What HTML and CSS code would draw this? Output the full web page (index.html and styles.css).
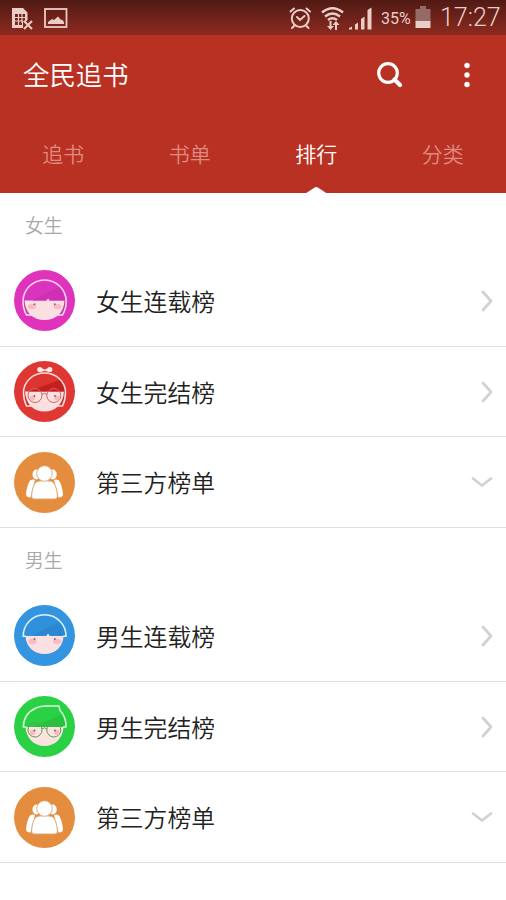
FILE: index.html
```html
<!DOCTYPE html>
<html lang="zh-CN">
<head>
<meta charset="utf-8">
<title>全民追书</title>
<link rel="stylesheet" href="styles.css">
</head>
<body>
<div class="status">
  <svg class="status-left" width="60" height="24" viewBox="10 5 60 24">
    <path fill="#e9cdc6" fill-rule="evenodd" d="M12 7H23L27.500 11.500V19L25 21.500 23 20V27H12ZM15 13V24H22V20H25V13Z"/>
    <path d="M15 16.500H25M15 20H23M18.500 13V24M22 13V22" stroke="#e9cdc6" stroke-width="1.200"/>
    <path d="M24 20L32 28M32 20L24 28" stroke="#e9cdc6" stroke-width="2"/>
    <rect x="45" y="8" width="21.500" height="18" fill="none" stroke="#e9cdc6" stroke-width="1.800"/>
    <path d="M48 23V21L52 18 54 19 58 15.500 61 19 62 18.500 64 21V23Z" fill="#e9cdc6"/>
  </svg>
  <svg class="status-signal" width="88" height="26" viewBox="288 4 88 26">
    <g fill="none" stroke="#e9cdc6" stroke-width="2" stroke-linecap="round">
      <circle cx="300.300" cy="17.500" r="8.500"/>
      <path d="M297 16L300 19 304.500 15M290.500 10.500L294 7.500M310 10.500L306.500 7.500M294 25L292 27M306.500 25L308.500 27"/>
      <path stroke-width="2.500" stroke-linecap="butt" d="M322 11.500Q332.500 3 343 11.500M325 15.500Q332.500 9.500 340 15.500M328 19Q332.500 15.500 337 19"/>
    </g>
    <path fill="#e9cdc6" d="M329.500 20H331.500V25H334L330.500 29 327 25H329.500ZM335 29V24H332.500L336 20 339.500 24H337V29ZM349 28.500V27L352 25.500V28.500ZM355 28.500V23.500L358 21.500V28.500ZM361 28.500V18L364.500 15.500V28.500ZM367.500 28.500V9L371.500 6.500V28.500Z"/>
  </svg>
  <span class="percent">35%</span>
  <svg class="battery" width="16" height="24" viewBox="0 0 16 24">
    <path d="M5 0H11V3H15.500V16H.5V3H5Z" fill="#956b67"/><path d="M.5 15H15.500V22H.5Z" fill="#e9cdc6"/>
  </svg>
  <span class="clock">17:27</span>
</div>
<header class="header">
  <div class="bar">
    <h1 class="title">全民追书</h1>
    <svg class="search" width="28" height="28" viewBox="0 0 28 28" fill="none" stroke="#fff"><circle cx="12" cy="12" r="9.300" stroke-width="3.200"/><path d="M18.500 18.500L24 24" stroke-width="4.200" stroke-linecap="round"/></svg>
    <svg class="more" width="6" height="26" viewBox="0 0 6 26" fill="#fff"><circle cx="3" cy="3.500" r="2.700"/><circle cx="3" cy="13" r="2.700"/><circle cx="3" cy="22.500" r="2.700"/></svg>
  </div>
  <nav class="tabs">
    <span class="tab">追书</span><span class="tab">书单</span><span class="tab active">排行</span><span class="tab">分类</span>
  </nav>
</header>
<main>
  <section>
    <h2 class="label">女生</h2>
    <div class="row">
      <svg class="avatar" viewBox="0 0 61 61">
        <circle cx="30.500" cy="30.500" r="30.500" fill="#e033bb"/>
        <path d="M9.500 30V36L12.500 45H17L12.500 30ZM51.500 30V36L48.500 45H44L48.500 30Z" fill="#b9479f"/>
        <path d="M10.500 30C11 43 19 50 30.500 50S50 43 50.500 30Z" fill="#fbe0e3"/>
        <path d="M9.500 30.500A21.500 20.500 0 0 1 52 30.500Z" fill="#d934bd"/><path d="M18 30.500L45 17Q51 22 51 30.500Z" fill="#cf2fb3"/>
        <path d="M18 45H12.500Q9 39 9 31.500A21.600 21.600 0 0 1 52.200 31.500Q52.200 39 48.500 45H43" fill="none" stroke="#ffd9f5" stroke-width="1.500"/>
        <path d="M32 30.800L34 28.500 36 30.800Z" fill="#fbe0e3"/>
        <g fill="#f7bcc3"><ellipse cx="18" cy="36.500" rx="4" ry="2.800"/><ellipse cx="43.500" cy="36.500" rx="4" ry="2.800"/></g>
        <circle cx="20.500" cy="34.300" r="1" fill="#94606a"/><circle cx="40.800" cy="34.300" r="1" fill="#94606a"/>
      </svg>
      <span class="name">女生连载榜</span>
      <svg class="arrow" width="14" height="24" viewBox="0 0 14 24"><path d="M3 3L11 12 3 21"/></svg>
    </div>
    <div class="row">
      <svg class="avatar" viewBox="0 0 61 61">
        <circle cx="30.500" cy="30.500" r="30.500" fill="#df3734"/>
        <path d="M10.500 30V37L12.500 45H17L13 30ZM50.500 30V37L48.500 45H44L48 30Z" fill="#bb3534"/>
        <path d="M11 30C11.500 43 19.500 50.500 30.500 50.500S49.500 43 50 30Z" fill="#fbe0df"/>
        <path d="M10 30.500A20.500 18 0 0 1 51 30.500Z" fill="#dc3431"/><path d="M14 30.500L46 19Q51 23 51 30.500Z" fill="#c3201f"/>
        <path d="M18 45H12.500Q9.500 39 9.500 31.500A21 19.500 0 0 1 51.500 31.500Q51.500 39 48.500 45H43" fill="none" stroke="#ffdfda" stroke-width="1.500"/>
        <g fill="#ffe5e1"><circle cx="25.800" cy="8.500" r="2.600"/><circle cx="35.800" cy="8.500" r="2.600"/><path d="M25 7H27L30.800 8.500 34.500 7H36.500V11H34.500L30.800 9.800 27 11H25Z"/></g>
        <g fill="none" stroke="#c66a68" stroke-width="1"><circle cx="21" cy="34.500" r="7"/><circle cx="39.800" cy="34.500" r="7"/><path d="M28 33.500Q30.400 31 32.800 33.500"/></g>
        <g fill="#f7bcbd"><circle cx="18.500" cy="37" r="2.700"/><circle cx="43" cy="37" r="2.700"/></g>
        <circle cx="20.500" cy="35" r=".9" fill="#94504f"/><circle cx="41" cy="35" r=".9" fill="#94504f"/>
      </svg>
      <span class="name">女生完结榜</span>
      <svg class="arrow" width="14" height="24" viewBox="0 0 14 24"><path d="M3 3L11 12 3 21"/></svg>
    </div>
    <div class="row">
      <svg class="avatar" viewBox="0 0 61 61"><use href="#group"/></svg>
      <span class="name">第三方榜单</span>
      <svg class="arrow" width="24" height="14" viewBox="0 0 24 14"><path d="M3 3.500L12 10.500 21 3.500"/></svg>
    </div>
  </section>
  <section>
    <h2 class="label">男生</h2>
    <div class="row">
      <svg class="avatar" viewBox="0 0 61 61">
        <circle cx="30.500" cy="30.500" r="30.500" fill="#3594df"/>
        <path d="M11.500 31C12 42 20 49 30.500 49S49 42 49.500 31Z" fill="#fbe0e3"/>
        <path d="M9.500 30.500A21 20.500 0 0 1 51.500 30.500Z" fill="#3190dc"/><path d="M18 30.500L45 17Q50 22 51 30.500Z" fill="#2b87d0"/>
        <path d="M12 31.200H9.200A21.400 21.400 0 0 1 52 31.200H49" fill="none" stroke="#dff3ff" stroke-width="1.500"/>
        <path d="M32 31.200L34 28.500 36 31.200Z" fill="#fbe0e3"/>
        <g fill="#f7bcc3"><ellipse cx="18.500" cy="36.500" rx="4" ry="2.800"/><ellipse cx="43" cy="36.500" rx="4" ry="2.800"/></g>
        <circle cx="20.500" cy="34" r="1" fill="#94606a"/><circle cx="40.800" cy="34" r="1" fill="#94606a"/>
      </svg>
      <span class="name">男生连载榜</span>
      <svg class="arrow" width="14" height="24" viewBox="0 0 14 24"><path d="M3 3L11 12 3 21"/></svg>
    </div>
    <div class="row">
      <svg class="avatar" viewBox="0 0 61 61">
        <circle cx="30.500" cy="30.500" r="30.500" fill="#2bd144"/>
        <path d="M11.500 31C12 42 20 50 30.500 50S49 42 49.500 31Z" fill="#fbe4df"/>
        <path d="M18 31L47 19Q51 23 51 31Z" fill="#25c43d"/>
        <path d="M12 31H9.200Q10 17 22 12 26 10 33 10H45L46 14.500Q52 20 52 31H49" fill="none" stroke="#d8ffdc" stroke-width="1.500" stroke-linejoin="round"/>
        <g fill="none" stroke="#619b62" stroke-width="1"><circle cx="21" cy="34" r="7"/><circle cx="39.800" cy="34" r="7"/><path d="M28 33Q30.400 30.500 32.800 33"/></g>
        <g fill="#f7bcbd"><circle cx="18.500" cy="36.500" r="2.700"/><circle cx="43" cy="36.500" r="2.700"/></g>
        <circle cx="20.500" cy="34.500" r=".9" fill="#75604f"/><circle cx="41" cy="34.500" r=".9" fill="#75604f"/>
      </svg>
      <span class="name">男生完结榜</span>
      <svg class="arrow" width="14" height="24" viewBox="0 0 14 24"><path d="M3 3L11 12 3 21"/></svg>
    </div>
    <div class="row">
      <svg class="avatar" viewBox="0 0 61 61">
        <g id="group">
          <circle cx="30.500" cy="30.500" r="30.500" fill="#e58d3e"/>
          <g fill="#fff"><ellipse cx="22.500" cy="22.500" rx="4" ry="5"/><ellipse cx="38.700" cy="22.500" rx="4" ry="5"/>
          <path d="M16 28.500Q19 27 21 28L16.500 45.500Q12 45.500 12 42 13 33 16 28.500ZM45 28.500Q42 27 40 28L44.500 45.500Q49 45.500 49 42 48 33 45 28.500Z"/></g>
          <path d="M23 29.500Q30.500 27 38 29.500 42.500 32 43.500 44 43.500 47 41 47H20Q17.500 47 17.500 44 18.500 32 23 29.500Z" fill="#fff" stroke="#d9a273" stroke-width=".9"/>
          <circle cx="30.500" cy="21.500" r="7.800" fill="#fff" stroke="#d9a273" stroke-width=".9"/>
        </g>
      </svg>
      <span class="name">第三方榜单</span>
      <svg class="arrow" width="24" height="14" viewBox="0 0 24 14"><path d="M3 3.500L12 10.500 21 3.500"/></svg>
    </div>
  </section>
</main>
</body>
</html>
```
FILE: styles.css
```css
* { box-sizing: border-box; }
body {
  margin: 0;
  height: 900px;
  overflow: hidden;
  background: #fff;
  font-family: "Noto Sans CJK SC", sans-serif;
  font-weight: 350;
}
svg { display: block; flex: none; }
h1, h2 { margin: 0; font-weight: inherit; }
.status {
  display: flex;
  align-items: center;
  height: 35px;
  padding: 0 5px 0 10px;
  background: linear-gradient(#501a14, #8d2a20);
  color: #e9cdc6;
  font-family: Roboto, sans-serif;
  font-weight: 400;
  white-space: nowrap;
}
.status-signal { margin-left: auto; }
.percent { width: 35px; padding: 1px 0 0 5px; font-size: 16px; }
.battery { margin-left: 4px; }
.clock { width: 64px; margin-left: 6px; padding-left: 3px; font-size: 25px; font-weight: 300; line-height: 35px; }
.header { height: 158px; background: #b93122; color: #fff; }
.bar { display: flex; align-items: center; height: 79px; padding: 0 36px 0 23px; }
.title { font-size: 26.400px; line-height: 38px; padding-bottom: 2px; }
.search { margin-left: auto; margin-right: 60px; }
.tabs { display: flex; height: 79px; }
.tab {
  position: relative;
  flex: 1;
  text-align: center;
  font-size: 21px;
  line-height: 78px;
  color: #de8a80;
}
.active { color: #fff; }
.active::after {
  content: "";
  position: absolute;
  left: 50%;
  bottom: 0;
  width: 20px;
  height: 6px;
  margin-left: -10px;
  background: #fff;
  clip-path: polygon(0 100%, 42% 8%, 50% 0, 58% 8%, 100% 100%);
}
.label { height: 63px; padding-left: 25px; font-size: 18.800px; line-height: 64px; color: #a8a8a8; }
.row {
  display: flex;
  align-items: center;
  height: 90.700px;
  padding: 0 12px 0 14px;
  border-bottom: 1px solid #e0e0e0;
}
.avatar { width: 61px; height: 61px; }
.name { flex: 1; padding-left: 21px; font-size: 23.800px; line-height: 36px; color: #222; }
.arrow { fill: none; stroke: #d2d2d2; stroke-width: 2.800; stroke-linecap: round; stroke-linejoin: round; }
```
